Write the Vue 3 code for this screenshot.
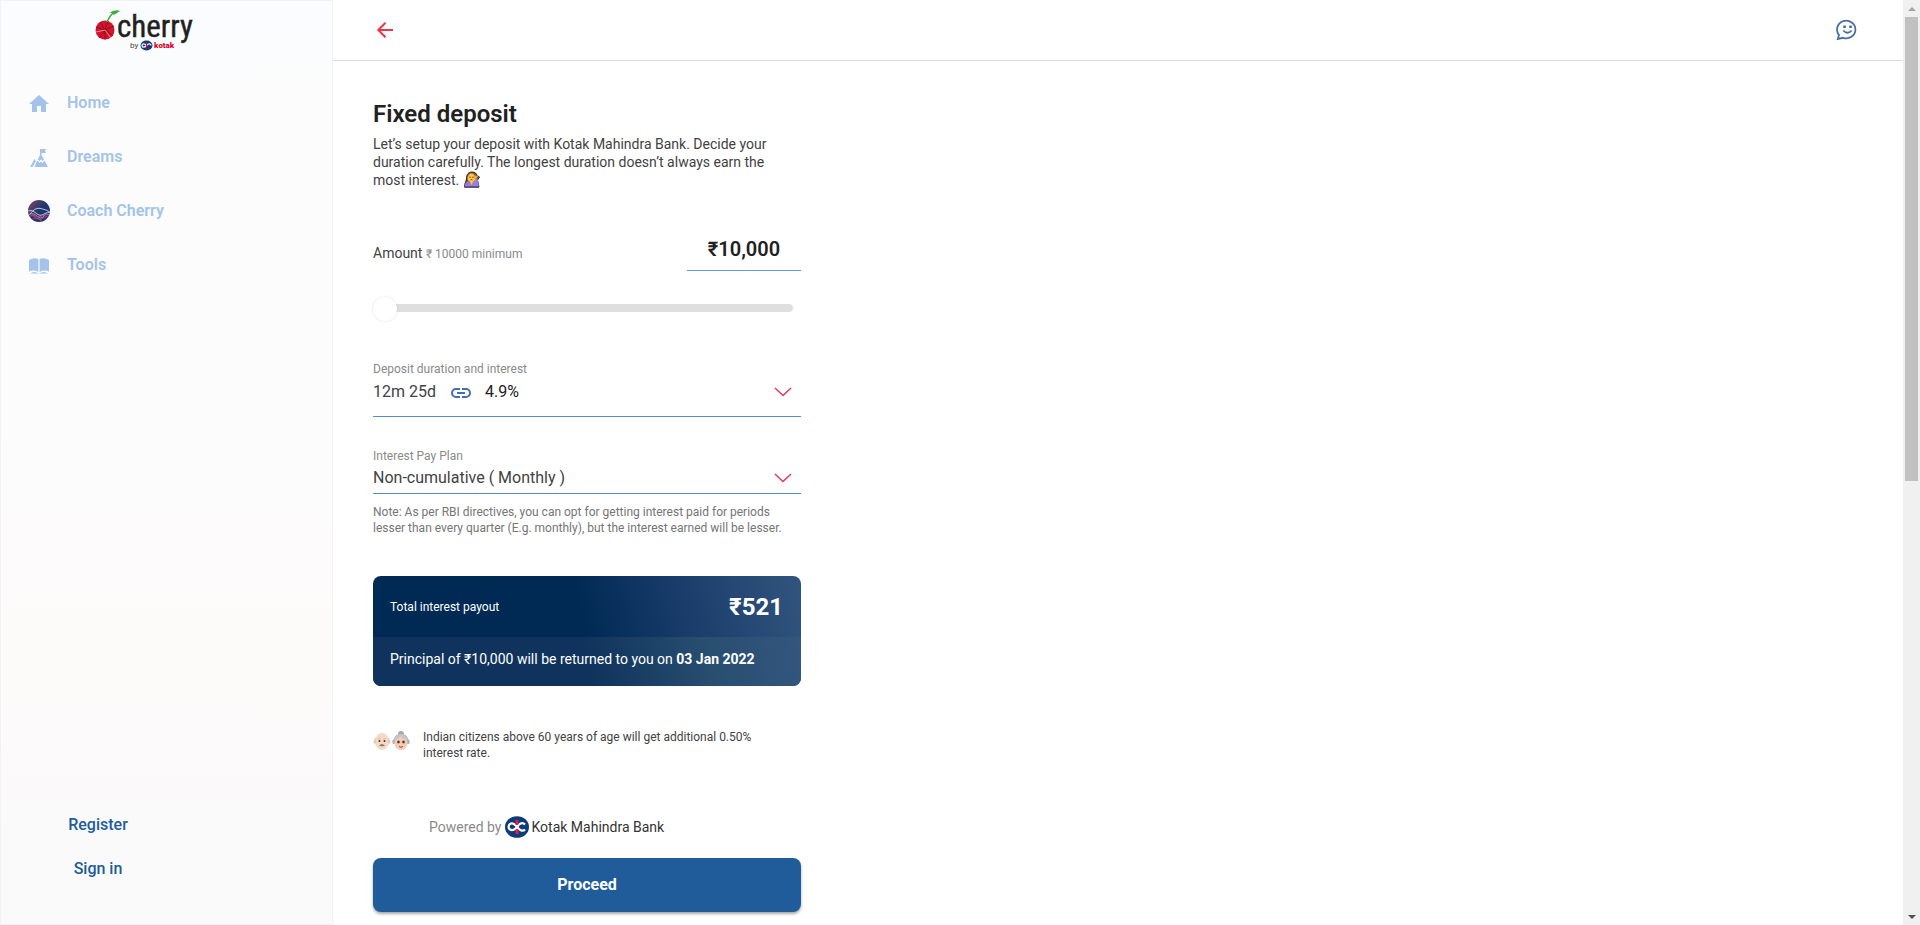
<script setup>
import { ref } from 'vue'

const navItems = [
  { id: 'home', label: 'Home' },
  { id: 'dreams', label: 'Dreams' },
  { id: 'coach', label: 'Coach Cherry' },
  { id: 'tools', label: 'Tools' }
]
const amount = ref(10000)
const amountText = ref('₹10,000')
const duration = ref('12m 25d')
const plan = ref('Non-cumulative ( Monthly )')

function syncAmount() {
  amountText.value = '₹' + Number(amount.value).toLocaleString('en-IN')
}
</script>

<template>
  <div class="app">
    <aside class="sidebar">
      <a class="brand" href="#" aria-label="cherry by kotak">
        <svg width="104" height="48" viewBox="0 0 104 48">
          <circle cx="13" cy="20" r="9.5" fill="#d3132b" />
          <path d="M13 20L4 17M13 20L7 28M13 20L13 29.500M13 20L21 26M13 20L22 16M13 20L8 12M13 20L16 11" stroke="#8d1023" stroke-width="1" />
          <path d="M13 20L4 22M13 20L19 28" stroke="#f3a3a8" stroke-width=".8" />
          <path d="M15 12C17 8 17.500 6 21 3" fill="none" stroke="#45a83d" stroke-width="1.500" />
          <path d="M17 3Q23-1 28 1Q25 3 22 5Q20 2 17 3Z" fill="#3fae3a" />
          <text class="logo-word" x="25" y="27">cherry</text>
          <text class="logo-by" x="38" y="38">by</text>
          <ellipse cx="54.500" cy="35.500" rx="6" ry="5" fill="#0b3c7c" />
          <path d="M54.500 35.500C52.500 33 50 33.500 50 35.500S52.500 38 54.500 35.500S59 33.500 59 35.500" fill="none" stroke="#fff" stroke-width="1.300" />
          <path d="M54.500 32V39" stroke="#e4002b" stroke-width="1.200" />
          <text class="logo-kotak" x="62" y="38">kotak</text>
        </svg>
      </a>
      <nav class="nav">
        <a v-for="item in navItems" :key="item.id" class="nav-link" href="#">
          <svg class="nav-icon" width="24" height="24" viewBox="0 0 24 24" fill="#a3c3ea">
            <path v-if="item.id === 'home'" d="M12 4L22 13H19V21H14V15H10V21H5V13H2Z" />
            <template v-else-if="item.id === 'dreams'">
              <path d="M13 4H19L18 6L19 8H14.500V10L17 14.500L15.500 16L14 14.500L12.500 16L11 14.500L10.500 15L13 10Z" />
              <path d="M10 16L11 16L12.500 18L14 16.500L15.500 18L17.500 15.500L21 22H7.500Z" />
              <path d="M7.500 14L9 16L5.500 22H3Z" />
            </template>
            <template v-else-if="item.id === 'coach'">
              <defs>
                <linearGradient id="coachFill" x1="0" y1="0" x2="1" y2="1">
                  <stop offset="0" stop-color="#8a4560" />
                  <stop offset=".5" stop-color="#1d376f" />
                  <stop offset="1" stop-color="#123f7c" />
                </linearGradient>
                <clipPath id="coachClip"><circle cx="12" cy="12" r="11" /></clipPath>
              </defs>
              <circle cx="12" cy="12" r="11" fill="url(#coachFill)" />
              <g clip-path="url(#coachClip)" fill="none" stroke-width=".8">
                <path d="M0 12Q5 10 9 14T17 15T24 14M3 15Q8 8 14 9.500T23 13" stroke="#e7dff0" />
                <path d="M1 16Q6 13 10 17T17 17T23 17" stroke="#c9a7cf" />
                <path d="M1 18Q5 15 9 18.500T16 19T22 19M4 21Q9 17 13 21T20 20M5 15.500Q12 19 15 17T23 16" stroke="#e0446b" />
              </g>
            </template>
            <template v-else>
              <path d="M2 7Q7 4 11.400 6V19Q7 16.500 2 18.500Z" />
              <path d="M22 7Q17 4 12.600 6V19Q17 16.500 22 18.500Z" />
              <path d="M3 20.500Q7 17.500 12 20.500Q17 17.500 21 20.500Z" />
            </template>
          </svg>
          {{ item.label }}
        </a>
      </nav>
      <div class="account">
        <a href="#">Register</a>
        <a href="#">Sign in</a>
      </div>
    </aside>

    <main class="main">
      <header class="topbar">
        <button class="icon-button" type="button" aria-label="Back">
          <svg width="24" height="24" viewBox="0 0 24 24" fill="none" stroke="#ee3548" stroke-width="2">
            <path d="M20 12H5.500M12.500 4.800L5.300 12L12.500 19.200" />
          </svg>
        </button>
        <button class="icon-button" type="button" aria-label="Chat">
          <svg width="24" height="24" viewBox="0 0 24 24" fill="none" stroke="#456fa5" stroke-width="1.800">
            <path d="M2.800 21L4 17A9.200 8.800 0 1 1 8 19.800Z" />
            <path d="M8.300 12.500Q12.500 17 16.700 12.500" />
            <path d="M9.500 7.500V10M15.500 7.500V10" stroke-width="2.600" />
          </svg>
        </button>
      </header>

      <form class="content" @submit.prevent>
        <h1>Fixed deposit</h1>
        <p class="intro">
          Let’s setup your deposit with Kotak Mahindra Bank. Decide your duration carefully. The longest duration doesn’t always earn the most interest.
          <svg class="facepalm" width="18" height="17" viewBox="0 0 18 17">
            <path d="M1.500 16C1.500 12 3 11 3.500 8C3.500 3 5.500 1 9 1C12 1 13.500 2.500 14 4.500L16.500 6L14.500 9L16 16Z" fill="#8a5439" stroke="#2f2628" />
            <path d="M1.500 16Q2 10.500 6 10.500L8 13L11 10.500L12.500 6L15 9L16 16Z" fill="#9a7bea" />
            <ellipse cx="8.500" cy="7" rx="3.900" ry="4.400" fill="#ffc83d" />
            <path d="M11 5L15.500 4.500L13.500 7L11 8Z" fill="#f0a92f" />
            <path d="M7 5.500V7M10 5.500V7M7.500 9Q8.500 8 9.500 9" fill="none" stroke="#5b3420" stroke-width=".9" />
            <path d="M7 11H10L8.500 14Z" fill="#ffc83d" />
            <path d="M1.500 16H16" stroke="#2f2628" />
          </svg>
        </p>

        <div class="amount-row">
          <label for="amount">Amount <small>₹ 10000 minimum</small></label>
          <input id="amount" v-model="amountText" class="amount-input" type="text">
        </div>
        <input v-model="amount" class="slider" type="range" min="10000" max="1000000" step="1000" aria-label="Deposit amount" @input="syncAmount">

        <div class="field duration">
          <label for="duration">Deposit duration and interest</label>
          <div class="control">
            <select id="duration" v-model="duration">
              <option>12m 25d</option>
            </select>
            <span class="rate">
              <svg width="22" height="20" viewBox="0 0 22 20" fill="none" stroke="#456fa5" stroke-width="2">
                <path d="M10 7H6A4 4 0 0 0 6 15H10M12 7H16A4 4 0 0 1 16 15H12M7 11H15" />
              </svg>
              4.9%
            </span>
            <svg class="chevron" width="18" height="10" viewBox="0 0 18 10"><path d="M1 1L9 8.500L17 1" /></svg>
          </div>
        </div>

        <div class="field plan">
          <label for="plan">Interest Pay Plan</label>
          <div class="control">
            <select id="plan" v-model="plan">
              <option>Non-cumulative ( Monthly )</option>
            </select>
            <svg class="chevron" width="18" height="10" viewBox="0 0 18 10"><path d="M1 1L9 8.500L17 1" /></svg>
          </div>
        </div>
        <p class="note">Note: As per RBI directives, you can opt for getting interest paid for periods lesser than every quarter (E.g. monthly), but the interest earned will be lesser.</p>

        <section class="summary">
          <div class="payout"><span>Total interest payout</span><strong>₹521</strong></div>
          <div class="principal">Principal of ₹10,000 will be returned to you on <b>03 Jan 2022</b></div>
        </section>

        <div class="senior">
          <svg width="38" height="20" viewBox="0 0 38 20">
            <ellipse cx="9" cy="10.500" rx="7" ry="8.500" fill="#f7d9c3" />
            <circle cx="2" cy="11" r="1.500" fill="#f0c5aa" /><circle cx="16" cy="11" r="1.500" fill="#f0c5aa" />
            <path d="M2.500 7Q1 9 2 11M15.500 7Q17 9 16 11" stroke="#c9c5c3" fill="none" />
            <path d="M5 8Q6.500 7 7.500 8M10.500 8Q11.500 7 13 8" stroke="#bbb" fill="none" />
            <circle cx="6.500" cy="10" r="1" fill="#40302c" /><circle cx="11.500" cy="10" r="1" fill="#40302c" />
            <path d="M6 14.500Q9 12 12 14.500Q9 16 6 14.500Z" fill="#777" />
            <circle cx="28" cy="3" r="3" fill="#aaa9aa" />
            <path d="M20 13Q18 10 21 8Q22 3 28 3T35 8Q38 10 36 13Z" fill="#b3b2b3" />
            <ellipse cx="28" cy="12" rx="6.500" ry="7" fill="#f2cdb4" />
            <path d="M21 9Q25 9 28 5Q31 9 35 9Q33 3 28 3T21 9Z" fill="#c6c5c6" />
            <circle cx="25.500" cy="11" r="1.300" fill="#40302c" stroke="#8c7770" stroke-width=".5" /><circle cx="30.500" cy="11" r="1.300" fill="#40302c" stroke="#8c7770" stroke-width=".5" />
            <path d="M26 15.500Q28 17 30 15.500" stroke="#b63b3b" fill="none" />
          </svg>
          <p>Indian citizens above 60 years of age will get additional 0.50% interest rate.</p>
        </div>

        <div class="powered">
          Powered by
          <svg width="24" height="22" viewBox="0 0 24 22">
            <ellipse cx="12" cy="11" rx="12" ry="10.800" fill="#0b3c7c" />
            <path d="M12 4V18" stroke="#ec1c35" stroke-width="2.600" />
            <path d="M20 8.500C17 5.500 14 8 12 11S7 14.500 5 13.500S3 8.500 6 7.500S10 9 12 11S17 16.500 20 13.500" fill="none" stroke="#fff" stroke-width="2.300" />
            <path d="M12 4V9M12 13V18" stroke="#ec1c35" stroke-width="2.600" />
          </svg>
          <span>Kotak Mahindra Bank</span>
        </div>
        <button class="proceed" type="submit">Proceed</button>
      </form>
    </main>

    <div class="scrollbar" aria-hidden="true">
      <i class="arrow up"></i>
      <div class="scroll-track"><div class="scroll-thumb"></div></div>
      <i class="arrow down"></i>
    </div>
  </div>
</template>

<style>
body { margin: 0; overflow: hidden; background: #fff; }
</style>

<style scoped>
* { box-sizing: border-box; }
.app {
  display: flex;
  height: 100vh;
  font-family: Roboto, "Liberation Sans", sans-serif;
  font-size: 14px;
  line-height: 18px;
  color: #212121;
}
a { text-decoration: none; }
button, input, select { font: inherit; color: inherit; }
p, h1 { margin: 0; }

.sidebar {
  display: flex;
  flex-direction: column;
  flex: 0 0 333px;
  border: 1px solid #f2f2f4;
  background: linear-gradient(180deg, #fafcff 0%, #fcfcfc 10%, #fcfcfc 45%, #fdfafa 70%, #fafafa 100%);
}
.brand { height: 60px; padding: 9px 0 0 91px; }
.brand svg { display: block; overflow: visible; }
.logo-word {
  font: 31px "Liberation Sans Narrow", "Roboto Condensed", Roboto, sans-serif;
  fill: #231f20;
  stroke: #231f20;
  stroke-width: .4px;
}
.logo-by { font: 8px Roboto, sans-serif; fill: #444; }
.logo-kotak { font: 900 8px Roboto, sans-serif; fill: #e4002b; }
.nav { display: flex; flex-direction: column; gap: 30px; padding: 30px 0 0 26px; }
.nav-link {
  display: flex;
  align-items: center;
  gap: 16px;
  height: 24px;
  font-size: 16px;
  font-weight: 600;
  color: #a3c3ea;
}
.account {
  display: flex;
  flex-direction: column;
  align-items: center;
  gap: 26px;
  width: 60px;
  margin: auto 0 46px 67px;
  font-size: 16px;
  font-weight: 500;
  color: #205c9a;
}
.account a { color: inherit; white-space: nowrap; }

.main { flex: 1; min-width: 0; overflow: hidden; }
.topbar {
  display: flex;
  align-items: center;
  justify-content: space-between;
  height: 61px;
  padding: 0 44px 0 40px;
  border-bottom: 1px solid #dedede;
}
.icon-button { display: flex; padding: 0; border: 0; background: none; }
.content { width: 508px; max-width: 100%; padding: 38px 40px 12px; }
h1 { margin-bottom: 6px; font-size: 24px; font-weight: 600; line-height: 30px; }
.intro { max-width: 400px; color: #424242; }
.facepalm { display: inline-block; margin: -2px 0 -3px; vertical-align: baseline; }

.amount-row { display: flex; align-items: flex-end; justify-content: space-between; margin-top: 40px; }
.amount-row label { padding-bottom: 8px; color: #424242; }
.amount-row small { font-size: 12px; color: #8a8a8a; }
.amount-input {
  width: 114px;
  height: 42px;
  padding: 0 0 2px;
  border: 0;
  border-bottom: 1px solid #5b9ade;
  background: none;
  outline: 0;
  font-size: 20px;
  font-weight: 600;
  text-align: center;
}
.slider {
  display: block;
  width: calc(100% - 8px);
  height: 26px;
  margin: 24px 0 0;
  appearance: none;
  background: none;
}
.slider::-webkit-slider-runnable-track { height: 8px; border-radius: 4px; background: #dfdfdf; }
.slider::-webkit-slider-thumb {
  width: 24px;
  height: 24px;
  margin-top: -7px;
  appearance: none;
  border-radius: 50%;
  background: #fff;
  box-shadow: 0 0 3px rgba(0, 0, 0, .12);
}

.field { border-bottom: 1px solid #4e8fd3; }
.field label { display: block; font-size: 12px; line-height: 16px; color: #8a8a8a; }
.control { display: grid; align-items: center; height: 30px; font-size: 16px; }
.control > * { grid-area: 1 / 1; }
.control select {
  width: 100%;
  height: 100%;
  padding: 0;
  border: 0;
  background: none;
  outline: 0;
  appearance: none;
  color: #424242;
}
.rate { display: flex; align-items: center; gap: 13px; padding-left: 77px; pointer-events: none; }
.chevron {
  justify-self: end;
  margin-right: 9px;
  fill: none;
  stroke: #e8325a;
  stroke-width: 1.4px;
  pointer-events: none;
}
.duration { margin-top: 40px; padding-bottom: 9px; }
.plan { margin-top: 31px; padding-bottom: 1px; }
.plan .control { height: 28px; }
.note { margin-top: 10px; font-size: 12px; line-height: 16px; color: #757575; }

.summary {
  margin-top: 40px;
  border-radius: 8px;
  overflow: hidden;
  background: linear-gradient(75deg, #002a54 0%, #002a54 50%, #173a68 70%, #32557f 100%);
  color: #fff;
}
.payout {
  display: flex;
  align-items: center;
  justify-content: space-between;
  height: 61px;
  padding: 0 18px 0 17px;
  font-size: 12px;
}
.payout strong { font-size: 24px; font-weight: 700; }
.principal {
  height: 49px;
  padding: 13px 17px;
  background: linear-gradient(75deg, #0f335c 0%, #0f335c 50%, #284e70 78%, #34567f 100%);
}
.principal b { font-weight: 700; }

.senior { display: flex; gap: 12px; margin-top: 43px; font-size: 12px; line-height: 16px; color: #424242; }
.senior svg { flex: none; margin-top: 2px; }
.senior p { max-width: 340px; }
.powered {
  display: flex;
  align-items: center;
  gap: 3px;
  height: 22px;
  margin: 55px 0 20px 56px;
  color: #8a8a8a;
}
.powered span { color: #333; }
.proceed {
  display: block;
  width: 100%;
  height: 54px;
  border: 0;
  border-radius: 8px;
  background: #205c9a;
  box-shadow: 0 2px 3px rgba(0, 0, 0, .35);
  font-size: 16px;
  font-weight: 700;
  color: #fff;
}

.scrollbar {
  display: flex;
  flex-direction: column;
  align-items: center;
  flex: 0 0 17px;
  background: #f0f0f0;
}
.scroll-track { flex: 1; width: 13px; }
.scroll-thumb { height: 52%; background: #c1c1c1; }
.arrow { width: 0; border: 4px solid transparent; }
.up { margin: 3px 0 6px; border-bottom-color: #a3a3a3; }
.down { margin: 6px 0 2px; border-top-color: #505050; }
</style>
